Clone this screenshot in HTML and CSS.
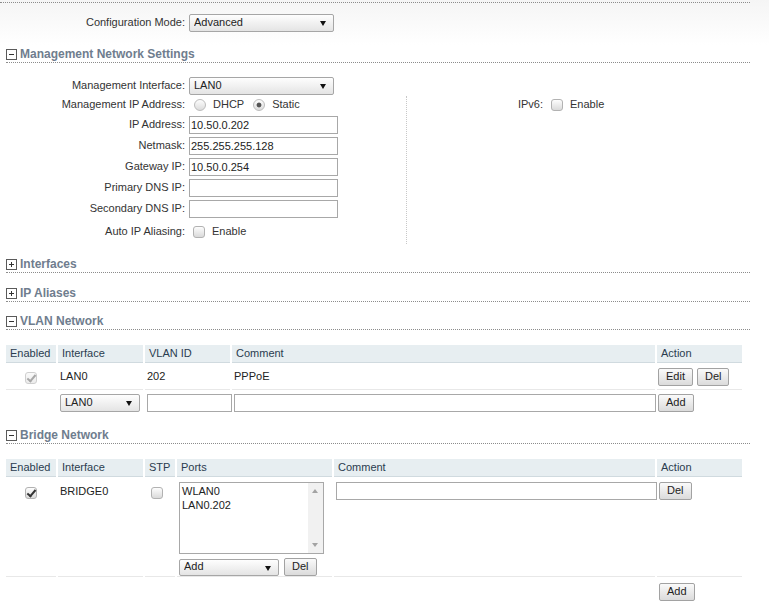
FILE: index.html
```html
<!DOCTYPE html>
<html>
<head>
<meta charset="utf-8">
<title>Network</title>
<link rel="stylesheet" href="styles.css">
</head>
<body>
<div class="page">
  <div class="topline"></div>

  <div class="frow config">
    <label class="lbl">Configuration Mode:</label>
    <span class="sel w145"><select><option>Advanced</option></select></span>
  </div>

  <section class="sec first">
    <h3 class="sec-h"><span class="tog minus"></span>Management Network Settings</h3>
    <div class="sec-body mgmt">
      <div class="frow r20">
        <label class="lbl">Management Interface:</label>
        <span class="sel w145"><select><option>LAN0</option></select></span>
      </div>
      <div class="cols">
        <div class="col-left">
          <div class="frow r18">
            <label class="lbl">Management IP Address:</label>
            <input type="radio" name="ipm" class="rd rd1">
            <span class="opt">DHCP</span>
            <input type="radio" name="ipm" class="rd rd2" checked>
            <span class="opt">Static</span>
          </div>
          <div class="frow"><label class="lbl">IP Address:</label><input class="txt" type="text" value="10.50.0.202"></div>
          <div class="frow"><label class="lbl">Netmask:</label><input class="txt" type="text" value="255.255.255.128"></div>
          <div class="frow"><label class="lbl">Gateway IP:</label><input class="txt" type="text" value="10.50.0.254"></div>
          <div class="frow"><label class="lbl">Primary DNS IP:</label><input class="txt" type="text" value=""></div>
          <div class="frow"><label class="lbl">Secondary DNS IP:</label><input class="txt" type="text" value=""></div>
          <div class="frow r24">
            <label class="lbl">Auto IP Aliasing:</label>
            <input type="checkbox" class="cb cb-l">
            <span class="opt">Enable</span>
          </div>
        </div>
        <div class="col-right">
          <div class="frow r18">
            <label class="lbl lbl-r">IPv6:</label>
            <input type="checkbox" class="cb">
            <span class="opt">Enable</span>
          </div>
        </div>
      </div>
    </div>
  </section>

  <section class="sec">
    <h3 class="sec-h"><span class="tog plus"></span>Interfaces</h3>
  </section>

  <section class="sec">
    <h3 class="sec-h"><span class="tog plus"></span>IP Aliases</h3>
  </section>

  <section class="sec vlan-sec">
    <h3 class="sec-h"><span class="tog minus"></span>VLAN Network</h3>
    <table class="tbl vlan">
      <colgroup>
        <col style="width:50px"><col style="width:85px"><col style="width:85px"><col style="width:423px"><col style="width:85px">
      </colgroup>
      <thead>
        <tr><th>Enabled</th><th>Interface</th><th>VLAN ID</th><th>Comment</th><th>Action</th></tr>
      </thead>
      <tbody>
        <tr class="data">
          <td class="c"><input type="checkbox" class="cb" checked disabled></td>
          <td>LAN0</td>
          <td>202</td>
          <td>PPPoE</td>
          <td class="act"><button class="btn">Edit</button><button class="btn">Del</button></td>
        </tr>
        <tr class="new">
          <td></td>
          <td><span class="sel w80"><select><option>LAN0</option></select></span></td>
          <td><input class="txt w85" type="text"></td>
          <td><input class="txt w422" type="text"></td>
          <td class="act"><button class="btn">Add</button></td>
        </tr>
      </tbody>
    </table>
  </section>

  <section class="sec bridge">
    <h3 class="sec-h"><span class="tog minus"></span>Bridge Network</h3>
    <table class="tbl br">
      <colgroup>
        <col style="width:50px"><col style="width:85px"><col style="width:30px"><col style="width:155px"><col style="width:321px"><col style="width:85px">
      </colgroup>
      <thead>
        <tr><th>Enabled</th><th>Interface</th><th>STP</th><th>Ports</th><th>Comment</th><th>Action</th></tr>
      </thead>
      <tbody>
        <tr class="data tall">
          <td class="c"><input type="checkbox" class="cb" checked></td>
          <td class="name">BRIDGE0</td>
          <td class="stp"><input type="checkbox" class="cb"></td>
          <td>
            <div class="lst">
              <div class="lst-items"><div>WLAN0</div><div>LAN0.202</div></div>
              <div class="lst-sb"><span class="up"></span><span class="down"></span></div>
            </div>
            <div class="lst-ctl">
              <span class="sel w100"><select><option>Add</option></select></span>
              <button class="btn">Del</button>
            </div>
          </td>
          <td><input class="txt w321" type="text"></td>
          <td class="act2"><button class="btn">Del</button></td>
        </tr>
        <tr class="foot">
          <td></td><td></td><td></td><td></td><td></td>
          <td class="act2"><button class="btn">Add</button></td>
        </tr>
      </tbody>
    </table>
  </section>
</div>
</body>
</html>
```

FILE: styles.css
```css
* { box-sizing: border-box; }
html, body { margin: 0; padding: 0; }
body {
  font: 11px/1.2 "Liberation Sans", Arial, sans-serif;
  color: #333;
  background: #fff linear-gradient(#f5f5f5, #ffffff 45px) no-repeat;
  width: 769px;
  min-height: 605px;
}
.page { padding: 0 19px 0 6px; }

.topline {
  height: 3px;
  width: 750px;
  margin-left: -6px;
  border-bottom: 1px dotted #8c8c8c;
}

.frow { display: flex; align-items: center; height: 21px; }
.frow.config { height: 18px; margin-top: 11px; }
.frow.r20 { height: 20px; }
.frow.r18 { height: 18px; }
.frow.r24 { height: 25px; }

.lbl { width: 179px; flex: none; text-align: right; margin-right: 4px; color: #333; }
.lbl-r { width: 136px; margin-right: 8px; }

/* selects */
.sel { position: relative; display: inline-block; height: 18px; flex: none; }
.sel select {
  -webkit-appearance: none;
  appearance: none;
  display: block;
  width: 100%;
  height: 18px;
  margin: 0;
  padding: 0 0 0 4px;
  border: 1px solid #a6a6a6;
  border-radius: 2px;
  background: linear-gradient(#fefefe, #e4e4e4);
  font: inherit;
  color: #222;
  outline: none;
}
.sel::after {
  content: "";
  position: absolute;
  right: 8px;
  top: 7px;
  border-left: 3.5px solid transparent;
  border-right: 3.5px solid transparent;
  border-top: 5px solid #111;
  pointer-events: none;
}
.w145 { width: 145px; }
.w80 { width: 80px; }
.w100 { width: 100px; }

/* text inputs */
.txt {
  height: 18px;
  width: 149px;
  margin: 0;
  padding: 0 1px;
  border: 1px solid #a8a8a8;
  background: #fff;
  font: inherit;
  color: #222;
  outline: none;
}
.w85 { width: 85px; }
.w422 { width: 422px; }
.w321 { width: 321px; }

/* radios & checkboxes */
.rd {
  -webkit-appearance: none;
  appearance: none;
  width: 12px;
  height: 12px;
  margin: 0;
  border: 1px solid #bcbcbc;
  border-radius: 50%;
  background: linear-gradient(#fdfdfd, #dcdcdc);
  flex: none;
}
.rd:checked {
  background: radial-gradient(circle, #555 0 2px, rgba(85,85,85,0) 2.8px), linear-gradient(#fdfdfd, #dcdcdc);
}
.rd1 { margin-left: 5px; }
.rd2 { margin-left: 9px; }
.opt { margin-left: 7px; color: #333; }

.cb {
  -webkit-appearance: none;
  appearance: none;
  position: relative;
  width: 12px;
  height: 12px;
  margin: 0;
  border: 1px solid #b2b2b2;
  border-radius: 3px;
  background: linear-gradient(#fdfdfd, #dadada);
  flex: none;
  vertical-align: middle;
}
.cb:checked::after {
  content: "";
  position: absolute;
  left: 3px;
  top: 0px;
  width: 3px;
  height: 7px;
  border: solid #333;
  border-width: 0 2px 2px 0;
  transform: rotate(40deg);
}
.cb:disabled { border-color: #cfcfcf; background: linear-gradient(#fafafa, #ececec); }
.cb:disabled::after { border-color: #a8a8a8; }
.cb-l { margin-left: 4px; }

/* sections */
.sec { margin-top: 13px; }
.sec.first { margin-top: 15px; }
.sec.vlan-sec { margin-top: 12px; }
.sec.bridge { margin-top: 12px; }
.sec-h {
  margin: 0;
  height: 16px;
  padding-bottom: 1px;
  line-height: 14px;
  font-size: 12px;
  font-weight: bold;
  color: #6f7d8e;
  border-bottom: 1px dotted #8c8c8c;
  display: flex;
  align-items: center;
}
.tog {
  position: relative;
  width: 11px;
  height: 11px;
  border: 1px solid #5a5a5a;
  margin-right: 3px;
  background: #fff;
  flex: none;
}
.tog::before {
  content: "";
  position: absolute;
  left: 2px;
  top: 4px;
  width: 5px;
  height: 1px;
  background: #333;
}
.tog.plus::after {
  content: "";
  position: absolute;
  left: 4px;
  top: 2px;
  width: 1px;
  height: 5px;
  background: #333;
}

.sec-body { margin-top: 13px; }
.cols { display: flex; }
.col-left { width: 401px; border-right: 1px dotted #c8c8c8; }
.col-right { flex: 1; }

/* tables */
.tbl {
  border-collapse: separate;
  border-spacing: 2px;
  table-layout: fixed;
  width: 740px;
  margin-left: -2px;
  margin-top: 13px;
}
.tbl th {
  height: 18px;
  padding: 0 4px;
  background: #e7eef1;
  border-bottom: 1px solid #d0dadf;
  text-align: left;
  font-weight: normal;
  color: #2a3c4f;
  white-space: nowrap;
}
.tbl td { padding: 0 0 0 2px; color: #222; vertical-align: middle; white-space: nowrap; }
.tbl td.c { padding: 0; text-align: center; }
.tbl tr.data td { height: 25px; border-bottom: 1px solid #e8e8e8; }
.tbl tr.new td { height: 22px; }
.tbl td.act { padding-left: 1px; }
.tbl td.act .btn + .btn { margin-left: 4px; }
.tbl td.act2 { padding-left: 2px; }

.btn {
  height: 18px;
  margin: 0;
  padding: 0 7px;
  border: 1px solid #a2a2a2;
  border-radius: 2px;
  background: linear-gradient(#fafafa, #dbdbdb);
  font: inherit;
  color: #222;
  vertical-align: middle;
}

/* bridge table */
.br tr.tall td { height: 98px; vertical-align: top; padding-top: 3px; }
.br tr.tall td.c { padding-top: 7px; }
.br tr.tall td.name { padding-top: 6px; }
.br tr.tall td.stp { padding-top: 7px; padding-left: 6px; }
.br tr.foot td { height: 24px; padding-top: 4px; vertical-align: top; }

.lst {
  display: flex;
  width: 145px;
  height: 72px;
  border: 1px solid #a8a8a8;
  background: #fff;
}
.lst-items { flex: 1; padding: 1px 2px; line-height: 14px; color: #222; }
.lst-sb { position: relative; width: 15px; background: #f1f1f1; }
.lst-sb .up, .lst-sb .down {
  position: absolute;
  left: 4px;
  border-left: 3.5px solid transparent;
  border-right: 3.5px solid transparent;
}
.lst-sb .up { top: 6px; border-bottom: 4px solid #a3a3a3; }
.lst-sb .down { bottom: 6px; border-top: 4px solid #a3a3a3; }
.lst-ctl { display: flex; align-items: center; margin-top: 4px; }
.lst-ctl .sel { height: 17px; }
.lst-ctl .sel select { height: 17px; }
.lst-ctl .btn { margin-left: 5px; }
```
